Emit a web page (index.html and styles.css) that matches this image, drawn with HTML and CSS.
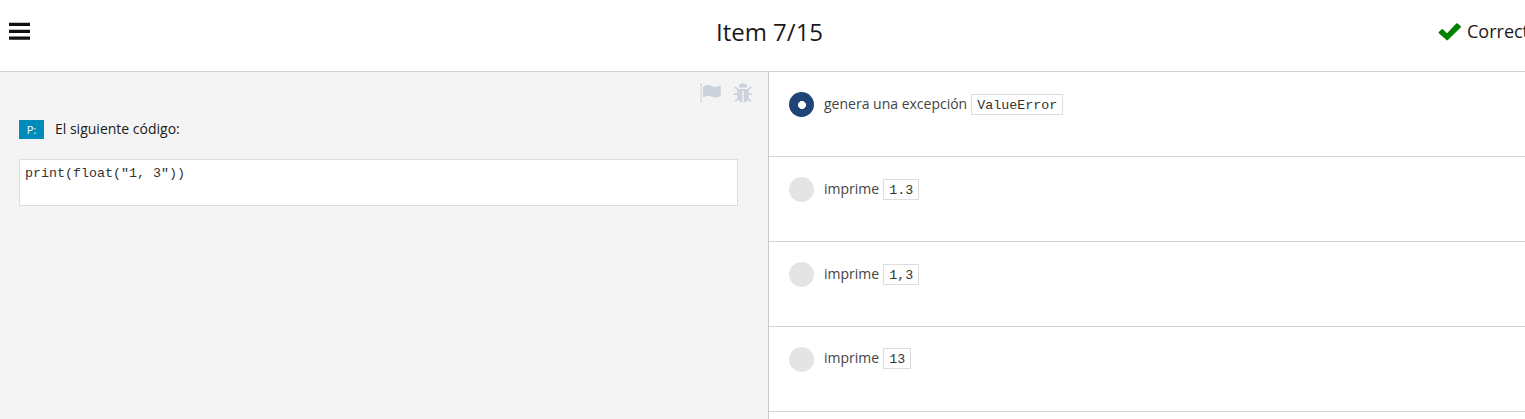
FILE: index.html
```html
<!DOCTYPE html>
<html lang="es">
<head>
<meta charset="utf-8">
<title>Item 7/15</title>
<link rel="stylesheet" href="styles.css">
</head>
<body>
<header class="topbar">
  <svg class="menu" width="22" height="18" viewBox="0 0 22 18"><path d="M0 .7h21v3.300H0zM0 7.700h21v3.300H0zM0 14.500h21v3.300H0z"/></svg>
  <h1 class="title">Item 7/15</h1>
  <div class="status">
    <svg class="check" width="24" height="19" viewBox="0 0 24 19"><path d="M.8 10.1 3.6 7.3Q4.2 6.7 4.8 7.3L9 11.3 18.3 1.5Q19 .8 19.7 1.5L22.7 4.3Q23.2 5 22.7 5.600L9.900 18.100Q9.200 18.700 8.500 18.100L.8 11.300Q.3 10.700.8 10.100z"/></svg>
    <span class="status-text">Correct</span>
  </div>
</header>
<main class="content">
  <section class="question">
    <div class="tools">
      <svg width="22" height="20" viewBox="0 0 22 20"><path d="M0 1.200a1.200 1.200 0 0 1 2.200 0q0 .7-.5 1.200V19a.5.5 0 0 1-1 0V2.400Q0 2 0 1.200zM3 3.700C7 1.300 9 1.500 12 3.100c3 1.500 5 .8 8-.9.500-.2.800 0 .8.500v9.500c0 .5-.2.800-.7 1-3.600 1.700-5.500 1.700-8.500.3-3-1.400-4.500-1-8.600.9z"/></svg>
      <svg width="20" height="20" viewBox="0 0 20 20"><path d="M5.700 4.600a4.300 4.300 0 0 1 8.600 0z"/><path d="M4.200 6h11.600v6c0 4.500-2 7.300-5.100 7.500V8H9.300v11.500C6.200 19.300 4.200 16.500 4.200 12z"/><path class="legs" d="M1.800 3.800 5 7M18.200 3.800 15 7M.7 11.200H5M19.300 11.200H15M2.200 18.500 5.500 15M17.800 18.500 14.500 15"/></svg>
    </div>
    <div class="prompt"><span class="badge">P:</span><span class="prompt-text">El siguiente código:</span></div>
    <pre class="code-block">print(float("1, 3"))</pre>
  </section>
  <section class="answers">
    <div class="answer"><span class="radio selected"></span><span class="label">genera una excepción</span><code>ValueError</code></div>
    <div class="answer"><span class="radio"></span><span class="label">imprime</span><code>1.3</code></div>
    <div class="answer"><span class="radio"></span><span class="label">imprime</span><code>1,3</code></div>
    <div class="answer last"><span class="radio"></span><span class="label">imprime</span><code>13</code></div>
  </section>
</main>
</body>
</html>
```
FILE: styles.css
```css
* { box-sizing: border-box; }
body {
  margin: 0;
  height: 419px;
  overflow: hidden;
  background: #fff;
  color: #1a1a1a;
  font-family: "Open Sans", sans-serif;
  font-size: 14px;
}
.topbar {
  height: 72px;
  display: grid;
  grid-template-columns: 1fr auto 1fr;
  align-items: start;
  border-bottom: 1px solid #d3d3d3;
}
.menu { margin: 22px 0 0 9px; fill: #111; }
.title {
  margin: 15px 0 0 14px;
  font-size: 24px;
  line-height: 33px;
  font-weight: 400;
}
.status {
  display: flex;
  justify-self: end;
  margin: 19px 0 0;
  width: 87px;
  overflow: hidden;
  font-size: 18px;
  line-height: 25px;
}
.check { flex: none; margin: 3px 5px 0 0; fill: #008000; }
.content { display: flex; height: 347px; }
.question {
  width: 769px;
  padding: 11px 15px 0 19px;
  background: #f4f4f4;
  border-right: 1px solid #c9cac6;
}
.tools {
  display: flex;
  justify-content: flex-end;
  gap: 11px;
  height: 20px;
  fill: #cbd2de;
}
.legs { stroke: #cbd2de; stroke-width: 1.7; fill: none; }
.prompt {
  display: flex;
  align-items: center;
  gap: 11px;
  height: 19px;
  margin-top: 17px;
  line-height: 19px;
}
.prompt-text { margin-bottom: 2px; }
.badge {
  width: 25px;
  height: 19px;
  background: #008cba;
  color: #fff;
  font-size: 11px;
  text-align: center;
}
.code-block {
  width: 719px;
  height: 47px;
  margin: 20px 0 0;
  padding: 5px;
  border: 1px solid #ddd;
  background: #fff;
  color: #333;
  font: 13.33px/17px "Liberation Mono", monospace;
}
.answers { flex: 1; }
.answer {
  display: flex;
  align-items: flex-start;
  height: 85px;
  padding: 20px 0 0 20px;
  border-bottom: 1px solid #d3d3d3;
  color: #444;
}
.radio {
  width: 25px;
  height: 25px;
  margin-right: 10px;
  border-radius: 50%;
  background: #e4e4e4;
}
.selected { background: radial-gradient(circle at 13px 13px, #fff 3.7px, #204378 4.3px); }
.label { margin: 2px 4px 0 0; line-height: 20px; }
code {
  height: 21px;
  margin-top: 2px;
  padding: 1px 5px 0;
  border: 1px solid #ddd;
  color: #333;
  font: 13.33px/20px "Liberation Mono", monospace;
}
.last .label, .last code { position: relative; top: -1px; }
```
